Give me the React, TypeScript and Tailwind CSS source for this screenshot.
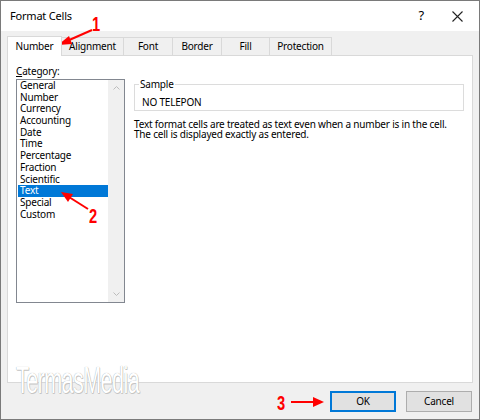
import React from 'react'

const categories = ['General', 'Number', 'Currency', 'Accounting', 'Date', 'Time', 'Percentage', 'Fraction', 'Scientific', 'Text', 'Special', 'Custom']

const tabs = [
    { label: 'Alignment', w: 'w-[62px]' },
    { label: 'Font', w: 'w-[49px]' },
    { label: 'Border', w: 'w-[49px]' },
    { label: 'Fill', w: 'w-[48px]' },
    { label: 'Protection', w: 'w-[62px]' },
]

function Annotations() {
    return (
        <svg className="absolute inset-0 pointer-events-none" width="480" height="420" viewBox="0 0 480 420">
            {/* 1 */}
            <line x1="91" y1="29" x2="66" y2="40" stroke="#ff0000" strokeWidth="2" />
            <polygon points="57,44 68,35 71,43" fill="#ff0000" />
            {/* 2 */}
            <line x1="87" y1="208" x2="68" y2="196" stroke="#ff0000" strokeWidth="2" />
            <polygon points="60,191 72,193 67,201" fill="#ff0000" />
            {/* 3 */}
            <line x1="290" y1="401" x2="314" y2="401" stroke="#ff0000" strokeWidth="2" />
            <polygon points="323,401 312,396 312,406" fill="#ff0000" />
        </svg>
    )
}

function App() {
    return (
        <div className="relative w-[480px] h-[420px] overflow-hidden bg-[#f0f0f0] border border-[#7a7a7a] text-[10px] tracking-[-0.2px] text-black font-['Noto_Sans','Open_Sans',sans-serif]">
            {/* Title bar */}
            <div className="h-[30px] bg-white flex items-center pl-[9px] pr-[16px] text-[11px]">
                <span className="flex-1">Format Cells</span>
                <span className="mr-[28px] text-[13px]">?</span>
                <svg width="11" height="11" viewBox="0 0 11 11">
                    <path d="M0.5 0.5 L10.5 10.5 M10.5 0.5 L0.5 10.5" stroke="#222" strokeWidth="1.1" />
                </svg>
            </div>

            {/* Tabs */}
            <div className="flex items-end h-[24px] pl-[6px]">
                <div className="relative z-10 w-[55px] h-[20px] -mb-px bg-white border border-b-0 border-[#d9d9d9] flex items-center justify-center">
                    Number
                </div>
                {tabs.map((t) => (
                    <div key={t.label} className={`${t.w} h-[18px] border border-b-0 border-l-0 border-[#d9d9d9] flex items-center justify-center bg-[#f0f0f0]`}>
                        {t.label}
                    </div>
                ))}
            </div>

            {/* Panel */}
            <div className="mx-[6px] h-[328px] bg-white border border-[#d9d9d9] flex pt-[9px] pl-[8px]">
                <div className="w-[109px] flex flex-col">
                    <span className="leading-[13px]"><span className="underline">C</span>ategory:</span>
                    <div className="mt-px h-[224px] border border-[#828790] flex">
                        <div className="flex-1 pl-px">
                            {categories.map((c) => (
                                <div
                                    key={c}
                                    className={`h-[11.7px] leading-[11.7px] pl-[2px] ${c === 'Text' ? 'bg-[#0078d7] text-white' : ''}`}
                                >
                                    {c}
                                </div>
                            ))}
                        </div>
                        <div className="w-[16px] bg-[#f0f0f0] flex flex-col justify-between items-center py-[6px]">
                            <svg width="7" height="4" viewBox="0 0 7 4"><path d="M0.5 3.5 L3.5 0.5 L6.5 3.5" stroke="#bcbcbc" fill="none" /></svg>
                            <svg width="7" height="4" viewBox="0 0 7 4"><path d="M0.5 0.5 L3.5 3.5 L6.5 0.5" stroke="#bcbcbc" fill="none" /></svg>
                        </div>
                    </div>
                </div>

                <div className="ml-[9px] w-[330px] flex flex-col pt-[19px]">
                    <div className="relative h-[27px] border border-[#dcdcdc] pl-[7px] pt-[11px] leading-[12px]">
                        <span className="absolute -top-[8px] left-[4px] bg-white px-[1px] leading-[14px]">Sample</span>
                        NO TELEPON
                    </div>
                    <p className="mt-[8px] leading-[10px] whitespace-nowrap">
                        Text format cells are treated as text even when a number is in the cell.
                        <br />
                        The cell is displayed exactly as entered.
                    </p>
                </div>
            </div>

            {/* Buttons */}
            <div className="flex justify-end gap-[10px] pr-[7px] pt-[8px]">
                <button className="w-[66px] h-[21px] bg-[#e1e1e1] border-2 border-[#0078d7]">OK</button>
                <button className="w-[66px] h-[21px] bg-[#e1e1e1] border border-[#adadad]">Cancel</button>
            </div>

            {/* Watermark */}
            <div className="absolute left-[15px] top-[362px] text-[36px] leading-[36px] text-white tracking-[-1px] origin-left scale-x-[0.6] [text-shadow:0_0_1px_#9a9a9a,1px_1px_0_#c8c8c8] font-['Liberation_Sans',sans-serif]">
                TermasMedia
            </div>

            {/* Red numbers */}
            <span className="absolute left-[91px] top-[12px] text-[21px] leading-[21px] font-bold text-[#ff0000] font-['Liberation_Sans',sans-serif] origin-left scale-x-[0.7]">1</span>
            <span className="absolute left-[88px] top-[204px] text-[21px] leading-[21px] font-bold text-[#ff0000] font-['Liberation_Sans',sans-serif] origin-left scale-x-[0.7]">2</span>
            <span className="absolute left-[276px] top-[391px] text-[21px] leading-[21px] font-bold text-[#ff0000] font-['Liberation_Sans',sans-serif] origin-left scale-x-[0.7]">3</span>

            <Annotations />
        </div>
    )
}
export default App
